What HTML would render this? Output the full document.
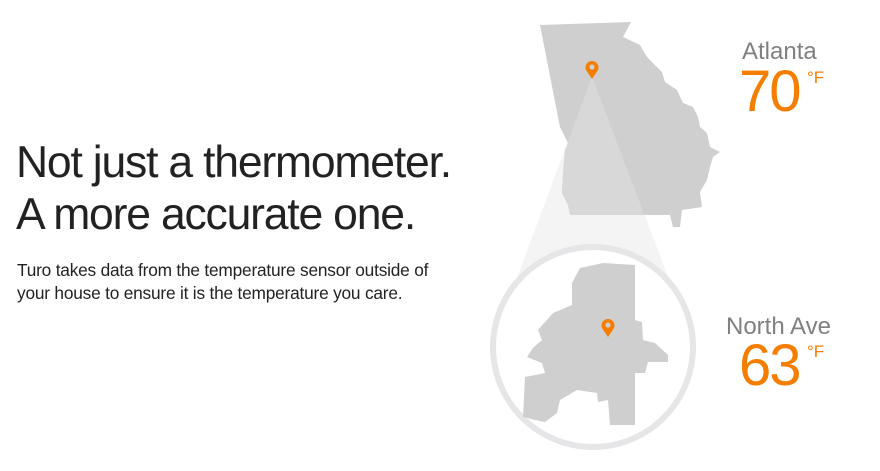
<!DOCTYPE html>
<html><head><style>
body{margin:0;width:880px;height:471px;background:#fff;font-family:"Liberation Sans",sans-serif;position:relative;overflow:hidden}
h1{position:absolute;left:16px;top:137px;margin:0;font-weight:normal;font-size:44.5px;line-height:52px;color:#222;letter-spacing:-1.2px}
p{position:absolute;left:17px;top:259px;margin:0;font-size:17.3px;line-height:23px;color:#222;letter-spacing:-0.2px}
.lbl{position:absolute;color:#808080;font-size:24px}
.tmp{position:absolute;color:#f57d00;font-size:58px;line-height:58px;letter-spacing:-2px}
.tmp span{position:absolute;font-size:17px;line-height:17px;left:68px;top:6px;letter-spacing:0}
</style></head><body>
<svg width="880" height="471" style="position:absolute;left:0;top:0">
<polygon points="592,77 490,350 696,350" fill="#f4f4f5"/>
<polygon points="540,25 631,22 623,37 640,45 647,57 662,72 665,82 677,90 683,103 693,107 698,117 700,127 707,133 710,147 720,152 713,157 710,167 707,180 700,192 702,207 682,210 680,227 673,227 670,215 570,215 568,205 562,193 563,173 565,150 568,143 560,127" fill="#cfcfcf"/>
<clipPath id="c"><polygon points="540,25 631,22 623,37 640,45 647,57 662,72 665,82 677,90 683,103 693,107 698,117 700,127 707,133 710,147 720,152 713,157 710,167 707,180 700,192 702,207 682,210 680,227 673,227 670,215 570,215 568,205 562,193 563,173 565,150 568,143 560,127"/></clipPath>
<polygon points="592,77 490,350 696,350" fill="#d8d8d8" clip-path="url(#c)"/>
<circle cx="593" cy="347" r="100" fill="#fff" stroke="#e6e6e8" stroke-width="6"/>
<polygon points="580,268 603,263 635,265 635,320 642,322 643,340 655,343 668,355 668,362 648,362 645,373 635,373 635,425 610,425 608,400 598,402 597,393 577,390 560,400 557,413 545,422 535,420 523,417 525,377 545,373 542,363 527,357 533,348 542,340 538,330 553,313 572,305 572,283" fill="#cfcfcf"/>
<g fill="#f57d00">
<path d="M592,79 L586,70 A6.5,6.5 0 1 1 598,70 Z"/><circle cx="592" cy="67" r="2.6" fill="#cfcfcf"/>
<path d="M608,337 L602,328 A6.5,6.5 0 1 1 614,328 Z"/><circle cx="608" cy="325" r="2.6" fill="#cfcfcf"/>
</g>
</svg>
<h1>Not just a thermometer.<br>A more accurate one.</h1>
<p>Turo takes data from the temperature sensor outside of<br>your house to ensure it is the temperature you care.</p>
<div class="lbl" style="left:742px;top:38px">Atlanta</div>
<div class="tmp" style="left:739px;top:63px">70<span>°F</span></div>
<div class="lbl" style="left:726px;top:313px">North Ave</div>
<div class="tmp" style="left:739px;top:337px">63<span>°F</span></div>
</body></html>
